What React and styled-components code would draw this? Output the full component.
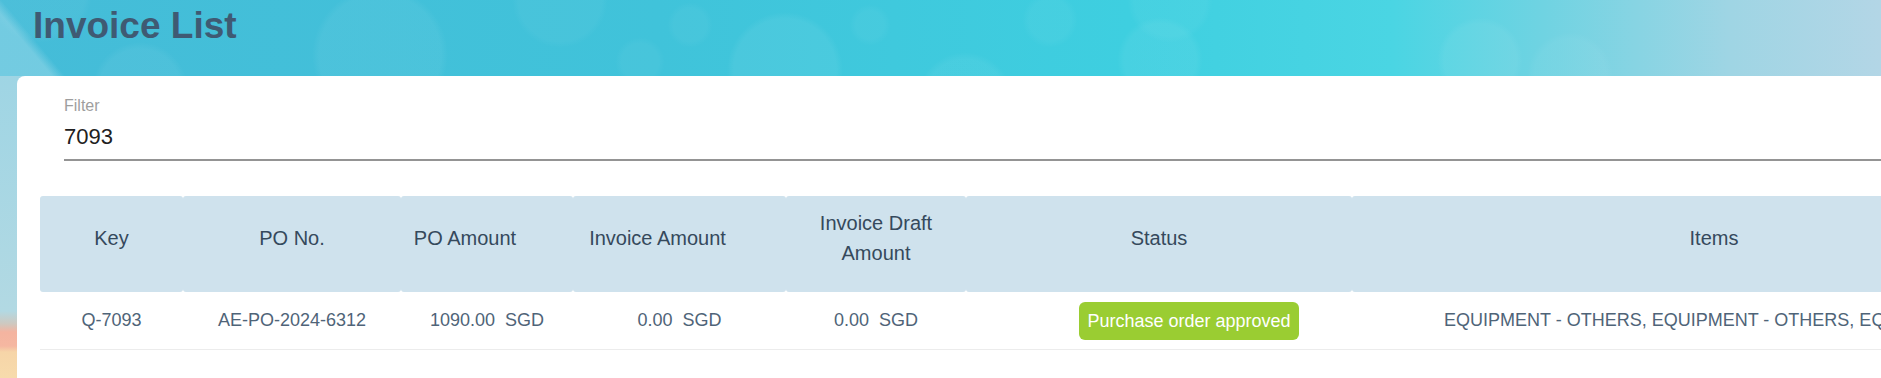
import React from "react";
import styled, { createGlobalStyle } from "styled-components";

const GlobalStyle = createGlobalStyle`
  html, body {
    margin: 0;
    padding: 0;
    height: 100%;
  }
  body {
    font-family: "Liberation Sans", Arial, sans-serif;
    overflow: hidden;
  }
  #root {
    height: 100%;
  }
`;

const Page = styled.div`
  display: flex;
  flex-direction: column;
  height: 100%;
  min-height: 378px;
  overflow: hidden;
`;

// soft bokeh spot for the banner backdrop
const bubble = (x, y, r, a) =>
  `radial-gradient(circle at ${x}px ${y}px, rgba(255,255,255,${a}) 0 ${r - 4}px, transparent ${r + 3}px)`;

const Banner = styled.header`
  flex: none;
  height: 76px;
  box-sizing: border-box;
  padding: 1px 0 0 33px;
  background:
    linear-gradient(50deg, rgba(190, 228, 240, 0.38) 40px, transparent 50px) 0 0 / 120px 76px no-repeat,
    ${bubble(40, -10, 50, 0.04)},
    ${bubble(140, 90, 45, 0.05)},
    ${bubble(380, 55, 65, 0.05)},
    ${bubble(560, 0, 45, 0.04)},
    ${bubble(640, 62, 22, 0.04)},
    ${bubble(690, 25, 20, 0.04)},
    ${bubble(785, 70, 55, 0.06)},
    ${bubble(870, 25, 18, 0.04)},
    ${bubble(965, 100, 45, 0.05)},
    ${bubble(1050, 20, 25, 0.04)},
    ${bubble(1160, 60, 40, 0.05)},
    ${bubble(1170, 0, 40, 0.04)},
    ${bubble(1480, 60, 40, 0.05)},
    ${bubble(1570, 75, 40, 0.04)},
    linear-gradient(90deg, #45bcd8 0%, #40c3da 35%, #3ecfe0 60%, #4ad5e3 74%, #6fd3e2 82%, #9fd5e4 92%, #b3d6e6 100%);
`;

const Title = styled.h1`
  margin: 0;
  font-size: 37px;
  line-height: 50px;
  font-weight: 700;
  color: #3f5a73;
`;

const Body = styled.main`
  flex: 1;
  display: flex;
  padding-left: 17px;
  min-height: 0;
  background: linear-gradient(
    180deg,
    #9fd5e4 0px,
    #b2d9e3 235px,
    #cfc8bf 248px,
    #f4b4a0 256px,
    #f5b7a1 270px,
    #f6d5a8 276px,
    #f7dbac 100%
  );
`;

const Card = styled.section`
  flex: 1;
  min-width: 0;
  background: #fff;
  border-top-left-radius: 8px;
  padding: 20px 0 0 23px;
  overflow: hidden;
`;

const Field = styled.label`
  display: block;
  margin-left: 24px;
`;

const FieldLabel = styled.span`
  display: block;
  font-size: 16px;
  line-height: 20px;
  color: #9e9e9e;
  margin-bottom: 7px;
`;

const FieldInput = styled.input`
  display: block;
  width: 100%;
  box-sizing: content-box;
  height: 28px;
  padding: 0 0 8px;
  margin: 0;
  border: none;
  border-bottom: 2px solid #949494;
  outline: none;
  background: transparent;
  font-family: inherit;
  font-size: 22px;
  line-height: 28px;
  color: #212121;
`;

const Table = styled.table`
  margin-top: 35px;
  width: 2036px;
  table-layout: fixed;
  border-collapse: separate;
  border-spacing: 0;
`;

const HeadRow = styled.tr`
  height: 96px;
`;

const Th = styled.th`
  background: #cfe2ed;
  border-radius: 3px;
  padding: 12px ${(p) => 8 + (p.$shift || 0)}px 24px 8px;
  font-size: 20px;
  line-height: 30px;
  font-weight: 400;
  color: #35495c;
  text-align: center;
  vertical-align: middle;
`;

const Row = styled.tr`
  height: 58px;
`;

const Td = styled.td`
  padding: 0 8px 0 ${(p) => 8 + (p.$indent || 0)}px;
  border-bottom: 1px solid #ececec;
  font-size: 18px;
  color: #4f6478;
  text-align: ${(p) => (p.$left ? "left" : "center")};
  vertical-align: middle;
  white-space: nowrap;
  overflow: hidden;
`;

const Badge = styled.span`
  display: inline-block;
  padding: 0 8px;
  border-radius: 6px;
  background: #9acd32;
  color: #fff;
  font-size: 18px;
  line-height: 38px;
`;

const columns = [
  { label: "Key", width: 143 },
  { label: "PO No.", width: 218 },
  { label: "PO Amount", width: 172, shift: 44 },
  { label: "Invoice Amount", width: 213, shift: 44 },
  { label: "Invoice Draft Amount", width: 180 },
  { label: "Status", width: 386 },
  { label: "Items", width: 724 },
];

const money = (v) => `${v}\u00a0 SGD`;

export default function App() {
  return (
    <>
      <GlobalStyle />
      <Page>
        <Banner>
          <Title>Invoice List</Title>
        </Banner>
        <Body>
          <Card>
            <Field>
              <FieldLabel>Filter</FieldLabel>
              <FieldInput defaultValue="7093" />
            </Field>
            <Table>
              <colgroup>
                {columns.map((c) => (
                  <col key={c.label} style={{ width: c.width }} />
                ))}
              </colgroup>
              <thead>
                <HeadRow>
                  {columns.map((c) => (
                    <Th key={c.label} $shift={c.shift}>
                      {c.label}
                    </Th>
                  ))}
                </HeadRow>
              </thead>
              <tbody>
                <Row>
                  <Td>Q-7093</Td>
                  <Td>AE-PO-2024-6312</Td>
                  <Td>{money("1090.00")}</Td>
                  <Td>{money("0.00")}</Td>
                  <Td>{money("0.00")}</Td>
                  <Td $indent={60}>
                    <Badge>Purchase order approved</Badge>
                  </Td>
                  <Td $left $indent={84}>
                    EQUIPMENT - OTHERS, EQUIPMENT - OTHERS, EQUIPMENT - OTHERS
                  </Td>
                </Row>
              </tbody>
            </Table>
          </Card>
        </Body>
      </Page>
    </>
  );
}
